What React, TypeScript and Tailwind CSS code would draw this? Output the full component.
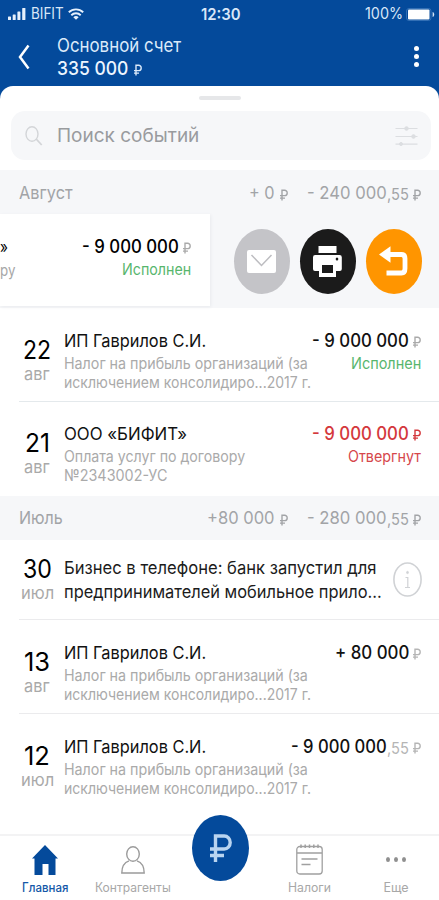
import { useLayoutEffect, useRef, useState } from "react";
import type { ReactNode } from "react";

/* One line of text condensed or widened to fill the width given by its class. */
function Fit({ className = "", children }: { className?: string; children: ReactNode }) {
  const box = useRef<HTMLSpanElement>(null);
  const text = useRef<HTMLSpanElement>(null);
  const [scale, setScale] = useState(0.87);
  useLayoutEffect(() => {
    if (box.current && text.current && text.current.offsetWidth > 0) {
      setScale(box.current.offsetWidth / text.current.offsetWidth);
    }
  }, [children, className]);
  return (
    <span ref={box} className={`block shrink-0 whitespace-nowrap ${className}`}>
      <span ref={text} className="inline-block origin-left" style={{ transform: `scaleX(${scale})` }}>
        {children}
      </span>
    </span>
  );
}

function Ruble({ className = "" }: { className?: string }) {
  return (
    <svg viewBox="0 0 8 12" fill="none" stroke="currentColor" className={`h-3 w-2 shrink-0 ${className}`}>
      <path d="M2 11.500V1.200h2.600a2.600 2.700 0 0 1 0 5.400H0M0 9.100h5" strokeWidth="1.400" />
    </svg>
  );
}

function StatusBar() {
  return (
    <div className="flex h-7 items-center pl-[8px] pr-[3px] text-[15.500px] leading-7 text-[#d9e7f8]">
      <svg viewBox="0 0 18 12" className="h-3 w-[18px]" fill="#e6f0fc">
        <rect x="0" y="8.500" width="3" height="3.500" rx=".6" />
        <rect x="4.700" y="6.500" width="3" height="5.500" rx=".6" />
        <rect x="9.400" y="3.500" width="3" height="8.500" rx=".6" />
        <rect x="14.200" y="0" width="3.200" height="12" rx=".6" />
      </svg>
      <Fit className="ml-[5px] w-[33px]">BIFIT</Fit>
      <svg viewBox="0 0 16 12" className="ml-1 h-3 w-4" fill="none" stroke="#e6f0fc" strokeWidth="1.900">
        <path d="M.8 4.300a10.400 10.400 0 0 1 14.400 0M3.300 7.200a6.800 6.800 0 0 1 9.400 0" />
        <path d="M8 11.700 5.300 9.200a4 4 0 0 1 5.400 0Z" fill="#e6f0fc" stroke="none" />
      </svg>
      <Fit className="ml-[117px] w-[40px] text-[16px] font-semibold">12:30</Fit>
      <Fit className="ml-auto w-[38px]">100%</Fit>
      <svg viewBox="0 0 30 13" className="ml-[3px] h-[13px] w-[30px]">
        <rect x=".5" y=".5" width="24.500" height="12" rx="2.500" fill="none" stroke="#3f79bb" strokeWidth=".8" />
        <rect x="2" y="1.500" width="21.500" height="10" rx="1" fill="#fff" />
        <path d="M26.600 4v5c2.200-.6 2.200-4.400 0-5Z" fill="#d5e5f6" />
      </svg>
    </div>
  );
}

function Header() {
  return (
    <header className="flex h-[59px] items-start text-[#dceafa]">
      <svg viewBox="0 0 12 26" className="ml-[18px] mt-4 h-[26px] w-3" fill="none" stroke="#fff" strokeWidth="2.500">
        <path d="M10.500 1.500 2 13l8.500 11.500" />
      </svg>
      <div className="ml-[27px] mt-[5px]">
        <Fit className="w-[124px] text-[18.500px] leading-6">Основной счет</Fit>
        <div className="flex items-center">
          <Fit className="w-[71px] text-[19px] font-medium leading-6 text-[#edf5ff]">335 000</Fit>
          <Ruble className="ml-1.5 mt-0.5" />
        </div>
      </div>
      <div className="ml-auto mr-5 mt-[18px] flex flex-col gap-[3px]">
        <i className="size-[5px] rounded-full bg-white" />
        <i className="size-[5px] rounded-full bg-white" />
        <i className="size-[5px] rounded-full bg-white" />
      </div>
    </header>
  );
}

function SearchBox() {
  return (
    <div className="ml-[11px] mr-[8px] mt-[11px] flex h-[49px] items-center rounded-[14px] bg-[#f6f7f9] pl-[14px] pr-[13px]">
      <svg viewBox="0 0 18 20" className="h-5 w-[18px]" fill="none" stroke="#d3d5d8" strokeWidth="1.400">
        <ellipse cx="7" cy="8" rx="6" ry="7.200" />
        <path d="m11.200 13 5.500 6" strokeWidth="1.800" />
      </svg>
      <Fit className="ml-[14px] w-[142px] text-[19px] leading-6 text-[#999b9e]">Поиск событий</Fit>
      <svg viewBox="0 0 23 20" className="ml-auto h-5 w-[23px]" stroke="#dcdee1" fill="#dcdee1">
        <path d="M.5 2.500h22M.5 10.500h22M.5 18.200h22" strokeWidth="1.200" />
        <circle cx="11.500" cy="2.500" r="1.800" />
        <circle cx="18.500" cy="10.500" r="1.800" />
        <circle cx="6" cy="18" r="1.500" />
      </svg>
    </div>
  );
}

type MonthProps = { name: ReactNode; income: ReactNode; expense: ReactNode; className?: string };

function MonthBar({ name, income, expense, className = "" }: MonthProps) {
  return (
    <div
      className={`flex h-11 items-center bg-[#f6f7f9] pl-[19px] pr-[18px] text-[17.500px] leading-6 text-[#a2a4a7] ${className}`}
    >
      {name}
      <div className="ml-auto flex items-center">
        {income}
        <Ruble className="ml-[5px] mt-1" />
        <span className="w-[19px]" />
        {expense}
        <Fit className="mt-0.5 w-[22px] text-[16px] leading-[22px]">,55</Fit>
        <Ruble className="ml-1 mt-1" />
      </div>
    </div>
  );
}

function SwipedRow() {
  return (
    <div className="flex h-[94px] bg-[#f6f7f9]">
      <div className="mb-0.5 flex w-[210px] items-start bg-white pt-[23px] shadow-[1px_1px_3px_#e9ebee]">
        <div>
          <Fit className="w-[8px] text-[17px] leading-5 text-black">»</Fit>
          <Fit className="mt-[3px] w-[15px] text-[16px] leading-5 text-[#a7a7a7]">ру</Fit>
        </div>
        <div className="ml-auto mr-[19px] flex flex-col items-end">
          <div className="flex items-center">
            <Fit className="w-[97px] text-[18px] font-medium leading-5 text-black">- 9 000 000</Fit>
            <Ruble className="ml-[4px] mt-0.5 text-[#aaa]" />
          </div>
          <Fit className="mt-[3px] w-[69px] text-[15.500px] leading-5 text-[#57b66d]">Исполнен</Fit>
        </div>
      </div>
      <div className="flex flex-1 items-center gap-[10px] pl-[23.500px]">
        <div className="flex h-[65px] w-[56px] items-center justify-center rounded-[50%] bg-[#c4c4c8]">
          <svg viewBox="0 0 29 23" className="h-[23px] w-[29px]">
            <rect width="29" height="23" rx="2" fill="#fff" />
            <path d="m4.500 5 10 10.500 10-10.500" fill="none" stroke="#bdbdc1" strokeWidth="1.500" />
          </svg>
        </div>
        <div className="flex h-[65px] w-[56px] items-center justify-center rounded-[50%] bg-[#1b1b1b]">
          <svg viewBox="0 0 29 31" className="h-[31px] w-[29px]" fill="#fff">
            <path d="M5.500 0h18v7h-18zM2.500 9h24a2.300 2.300 0 0 1 2.300 2.300V23a2 2 0 0 1-2 2H23v6H6v-6H2a2 2 0 0 1-2-2V11.300A2.300 2.300 0 0 1 2.500 9Z" />
            <path d="M9 19h11v8H9z" fill="#1b1b1b" />
            <ellipse cx="24" cy="13" rx="1.300" ry="1.500" fill="#1b1b1b" />
          </svg>
        </div>
        <div className="flex h-[65px] w-[56px] items-center justify-center rounded-[50%] bg-[#ff9500]">
          <svg viewBox="0 0 29 31" className="h-[31px] w-[29px]" fill="none" stroke="#fff">
            <path d="M8 8.500h14.500q3.500 0 3.500 4v10q0 4.500-3.500 4.500H7.500" strokeWidth="4.800" />
            <path d="M0 8.500 11.500.3v16.400Z" fill="#fff" stroke="none" />
          </svg>
        </div>
      </div>
    </div>
  );
}

function DateCell({ day, month, className = "" }: { day: ReactNode; month: ReactNode; className?: string }) {
  return (
    <div className={`flex w-9 shrink-0 flex-col items-center ${className}`}>
      <div className="text-[25.500px] leading-[28px] text-black">{day}</div>
      <div className="text-[17px] leading-[20px] text-[#a9a9a9]">{month}</div>
    </div>
  );
}

type RowProps = {
  day: ReactNode;
  month: ReactNode;
  title: ReactNode;
  lines: ReactNode;
  amount: ReactNode;
  status?: ReactNode;
  className?: string;
};

function EventRow({ day, month, title, lines, amount, status, className = "" }: RowProps) {
  return (
    <div className={`ml-[19px] flex h-[94px] items-start pr-[18px] ${className}`}>
      <DateCell day={day} month={month} className="mt-[5px]" />
      <div className="ml-[8.500px] flex-1">
        <div className="flex items-center justify-between text-[17.500px] leading-5 text-[#111]">
          {title}
          <div className="flex items-center">{amount}</div>
        </div>
        <div className="mt-[4px] flex justify-between">
          <div className="text-[15.500px] leading-[18.500px] text-[#aaa]">{lines}</div>
          <div className="text-[15.500px] leading-[18px]">{status}</div>
        </div>
      </div>
    </div>
  );
}

const payer = <Fit className="w-[142px]">ИП Гаврилов С.И.</Fit>;
const taxLines = (
  <>
    <Fit className="w-[244px]">Налог на прибыль организаций (за</Fit>
    <Fit className="w-[247px]">исключением консолидиро...2017 г.</Fit>
  </>
);

function TabBar() {
  return (
    <nav className="mt-auto flex h-[66px] border-t-2 border-[#f3f3f4] text-[12.500px] leading-4 text-[#a8a8a8]">
      <div className="flex w-[90px] flex-col items-center pt-[9px] text-[#1558a8]">
        <svg viewBox="0 0 26 30" className="h-[30px] w-[26px]" fill="#044a9b">
          <path d="M13 0 26 13.500h-2.500V30h-7V19h-6v11h-8V13.500H0Z" />
        </svg>
        <Fit className="mt-[5px] w-[46px] font-medium">Главная</Fit>
      </div>
      <div className="flex w-[86px] flex-col items-center pt-[10px]">
        <svg viewBox="0 0 24 28" className="h-7 w-6" fill="none" stroke="#9b9b9b" strokeWidth="1.400">
          <ellipse cx="12" cy="8" rx="6.300" ry="7.200" />
          <path d="M8 14.800C3 16.500.8 20 .8 27h22.400c0-7-2.200-10.500-7.200-12.200" />
        </svg>
        <Fit className="mt-[6px] w-[76px]">Контрагенты</Fit>
      </div>
      <div className="flex w-[89px] justify-center">
        <div className="-mt-[21px] flex h-[66px] w-[57px] shrink-0 items-center justify-center rounded-[50%] bg-[#044a9b]">
          <svg viewBox="0 0 22 28" className="h-7 w-[22px]" fill="none" stroke="#b9d4f0" strokeWidth="3.400">
            <path d="M5.500 28V2H14.200a6 6.500 0 0 1 0 13H0M0 21.500h14" />
          </svg>
        </div>
      </div>
      <div className="flex w-[88px] flex-col items-center pt-[8px]">
        <svg viewBox="0 0 27 31" className="h-[31px] w-[27px]" fill="none" stroke="#a0a0a0" strokeWidth="1.300">
          <rect x=".8" y="2.500" width="25.400" height="27.500" rx="3" />
          <path d="M1 9h25M5.500 15h16M5.500 20.500h9" />
          <path d="M5 .5v3.500M9.200.5v3.500M13.500.5v3.500M17.800.5v3.500M22 .5v3.500" strokeWidth="1.500" />
        </svg>
        <Fit className="mt-[5px] w-[43px]">Налоги</Fit>
      </div>
      <div className="flex flex-1 flex-col items-center pt-[21px]">
        <div className="flex gap-[4px]">
          <i className="h-[5px] w-[4px] rounded-[50%] bg-[#8f8f8f]" />
          <i className="h-[5px] w-[4px] rounded-[50%] bg-[#8f8f8f]" />
          <i className="h-[5px] w-[4px] rounded-[50%] bg-[#8f8f8f]" />
        </div>
        <Fit className="mt-[18px] w-[25px]">Еще</Fit>
      </div>
    </nav>
  );
}

export default function App() {
  return (
    <div className="flex h-[900px] w-[439px] flex-col overflow-hidden bg-[#044a9b] font-['Inter','Liberation_Sans',sans-serif]">
      <StatusBar />
      <Header />
      <main className="-mt-px flex flex-1 flex-col rounded-t-[13px] bg-white">
        <div className="mx-auto mt-[10px] h-[4px] w-[42px] rounded-full bg-[#e6e7e9]" />
        <SearchBox />
        <div className="h-[10px]" />
        <MonthBar
          className="pt-0.5"
          name={<Fit className="w-[54px]">Август</Fit>}
          income={<Fit className="w-[26px]">+ 0</Fit>}
          expense={<Fit className="w-[80px]">- 240 000</Fit>}
        />
        <SwipedRow />
        <EventRow
          className="border-b border-[#e4e9ec] pt-[23px]"
          day={<Fit className="w-[28px]">22</Fit>}
          month={<Fit className="w-[26px]">авг</Fit>}
          title={payer}
          lines={taxLines}
          amount={
            <>
              <Fit className="w-[97px] text-[18px] font-medium">- 9 000 000</Fit>
              <Ruble className="ml-1 mt-0.5 text-[#aaa]" />
            </>
          }
          status={<Fit className="w-[70px] text-[#57b66d]">Исполнен</Fit>}
        />
        <EventRow
          className="pt-[22px]"
          day={<Fit className="w-[25px]">21</Fit>}
          month={<Fit className="w-[26px]">авг</Fit>}
          title={<Fit className="w-[123px]">ООО «БИФИТ»</Fit>}
          lines={
            <>
              <Fit className="w-[181px]">Оплата услуг по договору</Fit>
              <Fit className="w-[103px]">№2343002-УС</Fit>
            </>
          }
          amount={
            <>
              <Fit className="w-[97px] text-[18px] font-medium text-[#d4383c]">- 9 000 000</Fit>
              <Ruble className="ml-1 mt-0.5 text-[#d4383c]" />
            </>
          }
          status={<Fit className="w-[73px] text-[#d6474b]">Отвергнут</Fit>}
        />
        <MonthBar
          name={<Fit className="w-[44px]">Июль</Fit>}
          income={<Fit className="w-[68px]">+80 000</Fit>}
          expense={<Fit className="w-[80px]">- 280 000</Fit>}
        />
        <div className="ml-[19px] flex h-20 items-start border-b border-[#ebebed] pr-[17.500px]">
          <DateCell
            className="mt-[14.500px]"
            day={<Fit className="w-[29px]">30</Fit>}
            month={<Fit className="w-[33px]">июл</Fit>}
          />
          <div className="ml-[8.500px] mt-4 text-[17.500px] leading-[23.500px] text-[#1c1c1c]">
            <Fit className="w-[312px]">Бизнес в телефоне: банк запустил для</Fit>
            <Fit className="w-[318px]">предпринимателей мобильное прило...</Fit>
          </div>
          <svg viewBox="0 0 29 35" className="ml-auto mt-[22px] h-[35px] w-[29px] shrink-0" fill="none" stroke="#d0d2d5">
            <ellipse cx="14.500" cy="17.500" rx="13.600" ry="16.500" strokeWidth="1.600" />
            <path d="M12.500 15.500h2.300v10M12 25.500h5" strokeWidth="1.200" />
            <ellipse cx="14.500" cy="10.500" rx="1" ry="1.200" fill="#d0d2d5" strokeWidth=".6" />
          </svg>
        </div>
        <EventRow
          className="border-b border-[#ebebed] pt-[23px]"
          day={<Fit className="w-[26px]">13</Fit>}
          month={<Fit className="w-[26px]">авг</Fit>}
          title={payer}
          lines={taxLines}
          amount={
            <>
              <Fit className="w-[74px] text-[18px] font-medium">+ 80 000</Fit>
              <Ruble className="ml-1 mt-0.5 text-[#b5b5b5]" />
            </>
          }
        />
        <EventRow
          className="pt-[23px]"
          day={<Fit className="w-[26px]">12</Fit>}
          month={<Fit className="w-[33px]">июл</Fit>}
          title={payer}
          lines={taxLines}
          amount={
            <>
              <Fit className="w-[96px] text-[18px] font-medium">- 9 000 000</Fit>
              <Fit className="mt-0.5 w-[22px] text-[16px] leading-[18px] text-[#b5b5b5]">,55</Fit>
              <Ruble className="ml-1 mt-0.5 text-[#b5b5b5]" />
            </>
          }
        />
        <TabBar />
      </main>
    </div>
  );
}
